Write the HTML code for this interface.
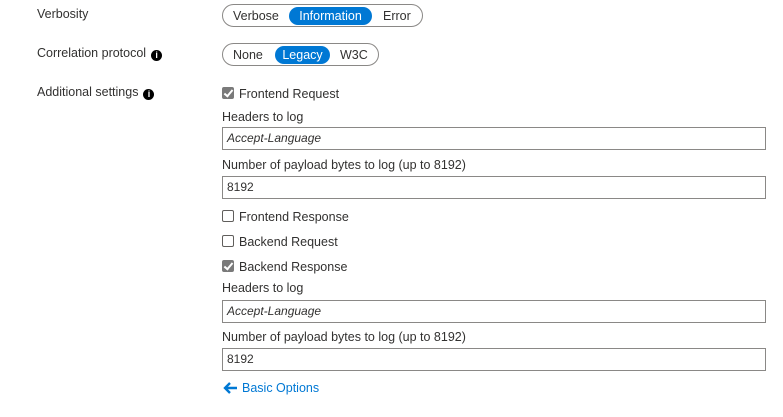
<!DOCTYPE html>
<html><head><style>
body{margin:0;width:783px;height:417px;background:#fff;font-family:"Liberation Sans",sans-serif;font-size:12.5px;color:#323130;position:relative;overflow:hidden}
.a{position:absolute;white-space:nowrap;line-height:16px}
.pill{position:absolute;border:1px solid #8a8886;border-radius:12px;height:23px;box-sizing:border-box}
.sel{position:absolute;background:#0078d4;color:#fff;border-radius:10px;height:18px;line-height:18px;text-align:center}
.inp{position:absolute;left:222px;width:544px;height:23px;border:1px solid #8a8886;box-sizing:border-box;padding-left:4px;line-height:21px;font-size:12px}
.cb{position:absolute;left:222px;width:12px;height:12px;border:1px solid #605e5c;border-radius:2px;box-sizing:border-box;background:#fff}
.cb.on{background:#7a7a7a;border-color:#7a7a7a}
.cb.on:after{content:"";position:absolute;left:3px;top:0px;width:3px;height:7px;border:solid #fff;border-width:0 2px 2px 0;transform:rotate(40deg)}
.i{display:inline-block;width:11px;height:11px;border-radius:50%;background:#000;color:#fff;font-size:9px;line-height:11px;text-align:center;font-weight:bold;margin-left:5px;vertical-align:-1px}
</style></head><body>
<div class="a" style="left:37px;top:6px">Verbosity</div>
<div class="pill" style="left:222px;top:4px;width:201px"></div>
<div class="sel" style="left:289px;top:7px;width:83px">Information</div>
<div class="a" style="left:233px;top:8px">Verbose</div>
<div class="a" style="left:383px;top:8px">Error</div>

<div class="a" style="left:37px;top:45px">Correlation protocol<span class="i">i</span></div>
<div class="pill" style="left:222px;top:43px;width:157px"></div>
<div class="sel" style="left:275px;top:46px;width:55px">Legacy</div>
<div class="a" style="left:233px;top:47px">None</div>
<div class="a" style="left:340px;top:47px">W3C</div>

<div class="a" style="left:37px;top:84px">Additional settings<span class="i">i</span></div>
<div class="cb on" style="top:87px"></div>
<div class="a" style="left:239px;top:86px">Frontend Request</div>
<div class="a" style="left:222px;top:109px">Headers to log</div>
<div class="inp" style="top:127px;font-style:italic">Accept-Language</div>
<div class="a" style="left:222px;top:157px">Number of payload bytes to log (up to 8192)</div>
<div class="inp" style="top:176px">8192</div>
<div class="cb" style="top:210px"></div>
<div class="a" style="left:239px;top:209px">Frontend Response</div>
<div class="cb" style="top:235px"></div>
<div class="a" style="left:239px;top:234px">Backend Request</div>
<div class="cb on" style="top:260px"></div>
<div class="a" style="left:239px;top:259px">Backend Response</div>
<div class="a" style="left:222px;top:280px">Headers to log</div>
<div class="inp" style="top:300px;font-style:italic">Accept-Language</div>
<div class="a" style="left:222px;top:329px">Number of payload bytes to log (up to 8192)</div>
<div class="inp" style="top:348px">8192</div>
<svg style="position:absolute;left:222px;top:381px" width="16" height="14" viewBox="0 0 16 14"><path d="M15 7H3M8 2L3 7l5 5" stroke="#0078d4" stroke-width="2.4" fill="none"/></svg>
<div class="a" style="left:242px;top:380px;color:#0078d4">Basic Options</div>
</body></html>
